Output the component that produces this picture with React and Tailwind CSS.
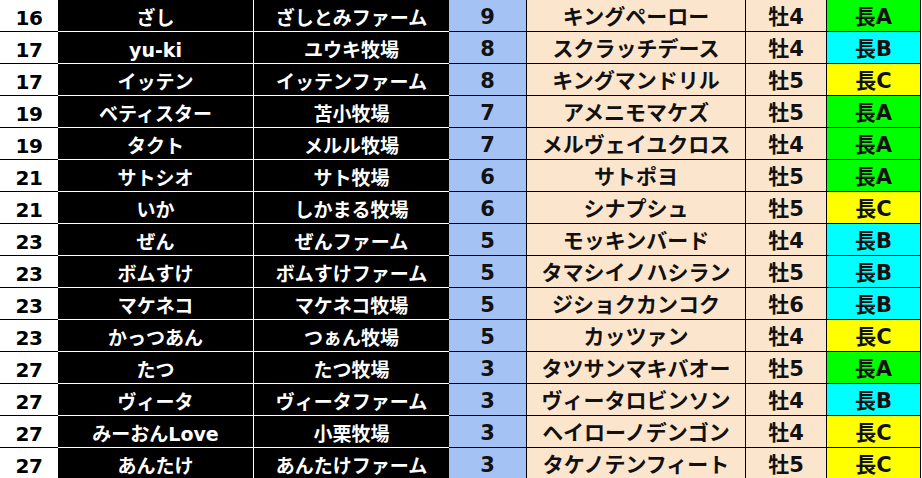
import React from "react";

const rows = [
  ["16", "ざし", "ざしとみファーム", "9", "キングペーロー", "牡4", "長A", "g"],
  ["17", "yu-ki", "ユウキ牧場", "8", "スクラッチデース", "牡4", "長B", "c"],
  ["17", "イッテン", "イッテンファーム", "8", "キングマンドリル", "牡5", "長C", "y"],
  ["19", "ベティスター", "苫小牧場", "7", "アメニモマケズ", "牡5", "長A", "g"],
  ["19", "タクト", "メルル牧場", "7", "メルヴェイユクロス", "牡4", "長A", "g"],
  ["21", "サトシオ", "サト牧場", "6", "サトポヨ", "牡5", "長A", "g"],
  ["21", "いか", "しかまる牧場", "6", "シナプシュ", "牡5", "長C", "y"],
  ["23", "ぜん", "ぜんファーム", "5", "モッキンバード", "牡4", "長B", "c"],
  ["23", "ボムすけ", "ボムすけファーム", "5", "タマシイノハシラン", "牡5", "長B", "c"],
  ["23", "マケネコ", "マケネコ牧場", "5", "ジショクカンコク", "牡6", "長B", "c"],
  ["23", "かっつあん", "つぁん牧場", "5", "カッツァン", "牡4", "長C", "y"],
  ["27", "たつ", "たつ牧場", "3", "タツサンマキバオー", "牡5", "長A", "g"],
  ["27", "ヴィータ", "ヴィータファーム", "3", "ヴィータロビンソン", "牡4", "長B", "c"],
  ["27", "みーおんLove", "小栗牧場", "3", "ヘイローノデンゴン", "牡4", "長C", "y"],
  ["27", "あんたけ", "あんたけファーム", "3", "タケノテンフィート", "牡5", "長C", "y"],
];

const gradeBg = { g: "bg-[#00ff00]", c: "bg-[#00ffff]", y: "bg-[#ffff00]" };

const cell = "flex items-end justify-center leading-none pb-[3px] whitespace-nowrap";

export default function App() {
  return (
    <div
      className="w-[922px] h-[478px] overflow-hidden bg-white font-bold"
      style={{ fontFamily: '"DejaVu Sans", "Noto Sans CJK JP", sans-serif' }}
    >
      <div className="flex flex-col">
        {rows.map((r, i) => (
          <div key={i} className="flex h-[32px]">
            <div className={`${cell} w-[58px] border-b border-black text-[20px] text-black bg-white tracking-[-0.5px]`}>
              {r[0]}
            </div>
            <div className={`${cell} w-[196px] bg-black text-white border-b border-r border-white text-[19px]`}>
              {r[1]}
            </div>
            <div className={`${cell} w-[195px] bg-black text-white border-b border-white text-[19px]`}>
              {r[2]}
            </div>
            <div className={`${cell} w-[78px] bg-[#a4c2f4] text-[#111] border-b border-r border-black text-[21px]`}>
              {r[3]}
            </div>
            <div className={`${cell} w-[219px] bg-[#fce5cd] text-[#111] border-b border-r border-black text-[21px]`}>
              {r[4]}
            </div>
            <div className={`${cell} w-[81px] bg-[#fce5cd] text-[#111] border-b border-r border-black text-[21px]`}>
              {r[5]}
            </div>
            <div className={`${cell} w-[94px] ${gradeBg[r[7]]} text-[#111] border-b border-r border-black text-[21px]`}>
              {r[6]}
            </div>
          </div>
        ))}
      </div>
    </div>
  );
}
